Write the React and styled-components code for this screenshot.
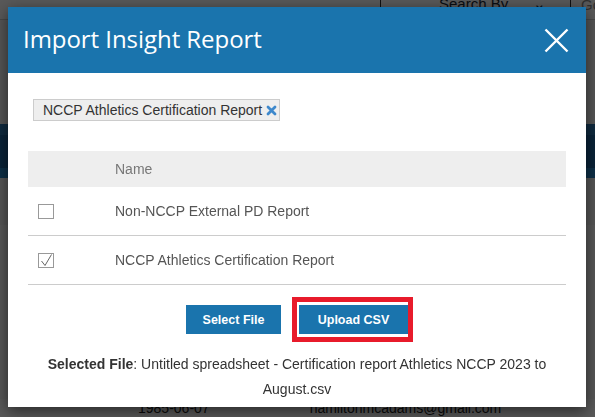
import React, { useState } from 'react';
import styled, { createGlobalStyle } from 'styled-components';

const GlobalStyle = createGlobalStyle`
  html, body {
    margin: 0;
    padding: 0;
    background: #ffffff;
    font-family: "Liberation Sans", Arial, sans-serif;
  }
`;

/* page behind the modal */
const Page = styled.div`
  height: 417px;
  overflow: hidden;
  background: #ffffff;
`;

const Toolbar = styled.div`
  display: flex;
  justify-content: flex-end;
  height: 19px;
  border-bottom: 1px solid #cfcfcf;
`;

const SearchSelect = styled.div`
  display: flex;
  align-items: flex-start;
  gap: 25px;
  width: 191px;
  box-sizing: border-box;
  padding: 0 0 0 58px;
  border-left: 1px solid #333;
  border-right: 1px solid #333;
  font-size: 15px;
  color: #1a2a3a;
  line-height: 15px;
  overflow: hidden;

  span {
    margin-top: -4px;
  }
`;

const GoBox = styled.div`
  width: 24px;
  box-sizing: border-box;
  padding-left: 10px;
  font-size: 15px;
  color: #888;
  line-height: 15px;
  overflow: hidden;

  span {
    display: block;
    margin-top: -3px;
  }
`;

const SubBar = styled.div`
  height: 104px;
  background: #f4f4f4;
`;

const NavBand = styled.div`
  height: 54px;
  background: #1d66a0;
  border-top: 11px solid #2b78b6;
  border-bottom: 10px solid #2a88cc;
  box-sizing: border-box;
`;

const Stripe = styled.div`
  height: ${p => p.$h}px;
  background: ${p => p.$bg};
`;

const DataRow = styled.div`
  display: flex;
  gap: 100px;
  padding: 0 0 0 138px;
  font-size: 14px;
  color: #222;
  line-height: 18px;
`;

const Backdrop = styled.div`
  position: fixed;
  inset: 0;
  background: rgba(0, 0, 0, 0.65);
`;

/* modal */
const Modal = styled.div`
  position: absolute;
  top: 7px;
  left: 8px;
  width: 578px;
  background: #fff;
  box-shadow: 0 4px 14px rgba(0, 0, 0, 0.55);
`;

const Header = styled.div`
  display: flex;
  align-items: center;
  justify-content: space-between;
  height: 66px;
  padding: 0 17px 0 15px;
  background: #1a74ad;
`;

const Title = styled.h2`
  margin: -3px 0 0;
  font-family: "Open Sans", "Noto Sans", sans-serif;
  font-weight: 400;
  font-size: 24px;
  color: #fff;
  letter-spacing: -0.05px;
`;

const CloseButton = styled.button`
  display: flex;
  padding: 0;
  border: 0;
  background: none;
  cursor: pointer;
`;

const Body = styled.div`
  padding: 26px 20px 5px;
`;

const TagList = styled.div`
  display: flex;
  padding-left: 5px;
`;

const Tag = styled.span`
  display: inline-flex;
  align-items: center;
  gap: 4px;
  height: 22px;
  padding: 0 2px 0 9px;
  box-sizing: border-box;
  background: #eeeeee;
  border: 1px solid #cccccc;
  font-size: 14px;
  color: #333;
`;

const Table = styled.table`
  width: 100%;
  margin-top: 30px;
  border-collapse: collapse;
  font-size: 14px;
`;

const HeadCell = styled.th`
  height: 36px;
  padding: 0;
  background: #eeeeee;
  font-weight: 400;
  text-align: left;
  color: #777;
  width: ${p => (p.$narrow ? '87px' : 'auto')};
`;

const Row = styled.tr`
  border-bottom: 1px solid #cccccc;
`;

const Cell = styled.td`
  height: 48px;
  padding: 0 0 0 ${p => (p.$check ? '10px' : '0')};
  color: #555;
  vertical-align: middle;
`;

const Box = styled.span`
  display: flex;
  align-items: center;
  justify-content: center;
  width: 16px;
  height: 15px;
  box-sizing: border-box;
  border: 1px solid #999;
  background: #fff;
  cursor: pointer;
`;

const Actions = styled.div`
  display: flex;
  justify-content: center;
  gap: 18px;
  margin-top: 20px;
`;

const Button = styled.button`
  position: relative;
  height: 29px;
  padding: 0;
  width: ${p => p.$w}px;
  border: 0;
  background: #1a74ad;
  color: #fff;
  font-family: "Liberation Sans", Arial, sans-serif;
  font-weight: 700;
  font-size: 12.5px;
  cursor: pointer;

  ${p =>
    p.$marked &&
    `
    &::after {
      content: '';
      position: absolute;
      top: -8px;
      bottom: -8px;
      left: -7px;
      right: -5px;
      border: 5px solid #e81b2b;
      pointer-events: none;
    }
  `}
`;

const SelectedFile = styled.p`
  margin: 18px 0 0;
  font-size: 14px;
  line-height: 25px;
  color: #333;
  text-align: center;

  b {
    font-weight: 700;
  }
`;

const CheckMark = () => (
  <svg width="13" height="13" viewBox="0 0 13 13">
    <polyline points="1.5,7 5,11.5 11.5,0.5" fill="none" stroke="#666" strokeWidth="1" />
  </svg>
);

const reports = [
  { id: 1, name: 'Non-NCCP External PD Report' },
  { id: 2, name: 'NCCP Athletics Certification Report' },
];

const App = () => {
  const [checked, setChecked] = useState([2]);

  const toggle = id =>
    setChecked(checked.includes(id) ? checked.filter(c => c !== id) : [...checked, id]);

  return (
    <>
      <GlobalStyle />
      <Page>
        <Toolbar>
          <SearchSelect>
            <span>Search By</span>
            <span>⌄</span>
          </SearchSelect>
          <GoBox>
            <span>Go</span>
          </GoBox>
        </Toolbar>
        <SubBar />
        <NavBand />
        <Stripe $h={47} $bg="#f6f6f6" />
        <Stripe $h={15} $bg="#ffffff" />
        <Stripe $h={159} $bg="#fafafa" />
        <DataRow>
          <span>1985-06-07</span>
          <span>hamiltonmcadams@gmail.com</span>
        </DataRow>
      </Page>
      <Backdrop />
      <Modal>
        <Header>
          <Title>Import Insight Report</Title>
          <CloseButton aria-label="Close">
            <svg width="25" height="25" viewBox="0 0 25 25">
              <path d="M1.5 1.5 L23.5 23.5 M23.5 1.5 L1.5 23.5" stroke="#fff" strokeWidth="2.4" />
            </svg>
          </CloseButton>
        </Header>
        <Body>
          <TagList>
            <Tag>
              NCCP Athletics Certification Report
              <svg width="11" height="11" viewBox="0 0 11 11">
                <path d="M2 2 L9 9 M9 2 L2 9" stroke="#3d88cc" strokeWidth="2.8" strokeLinecap="round" />
              </svg>
            </Tag>
          </TagList>
          <Table>
            <thead>
              <tr>
                <HeadCell $narrow />
                <HeadCell>Name</HeadCell>
              </tr>
            </thead>
            <tbody>
              {reports.map(r => (
                <Row key={r.id}>
                  <Cell $check>
                    <Box onClick={() => toggle(r.id)}>
                      {checked.includes(r.id) && <CheckMark />}
                    </Box>
                  </Cell>
                  <Cell>{r.name}</Cell>
                </Row>
              ))}
            </tbody>
          </Table>
          <Actions>
            <Button $w={95}>Select File</Button>
            <Button $w={109} $marked>
              Upload CSV
            </Button>
          </Actions>
          <SelectedFile>
            <b>Selected File</b>: Untitled spreadsheet - Certification report Athletics NCCP 2023 to August.csv
          </SelectedFile>
        </Body>
      </Modal>
    </>
  );
};

export default App;
